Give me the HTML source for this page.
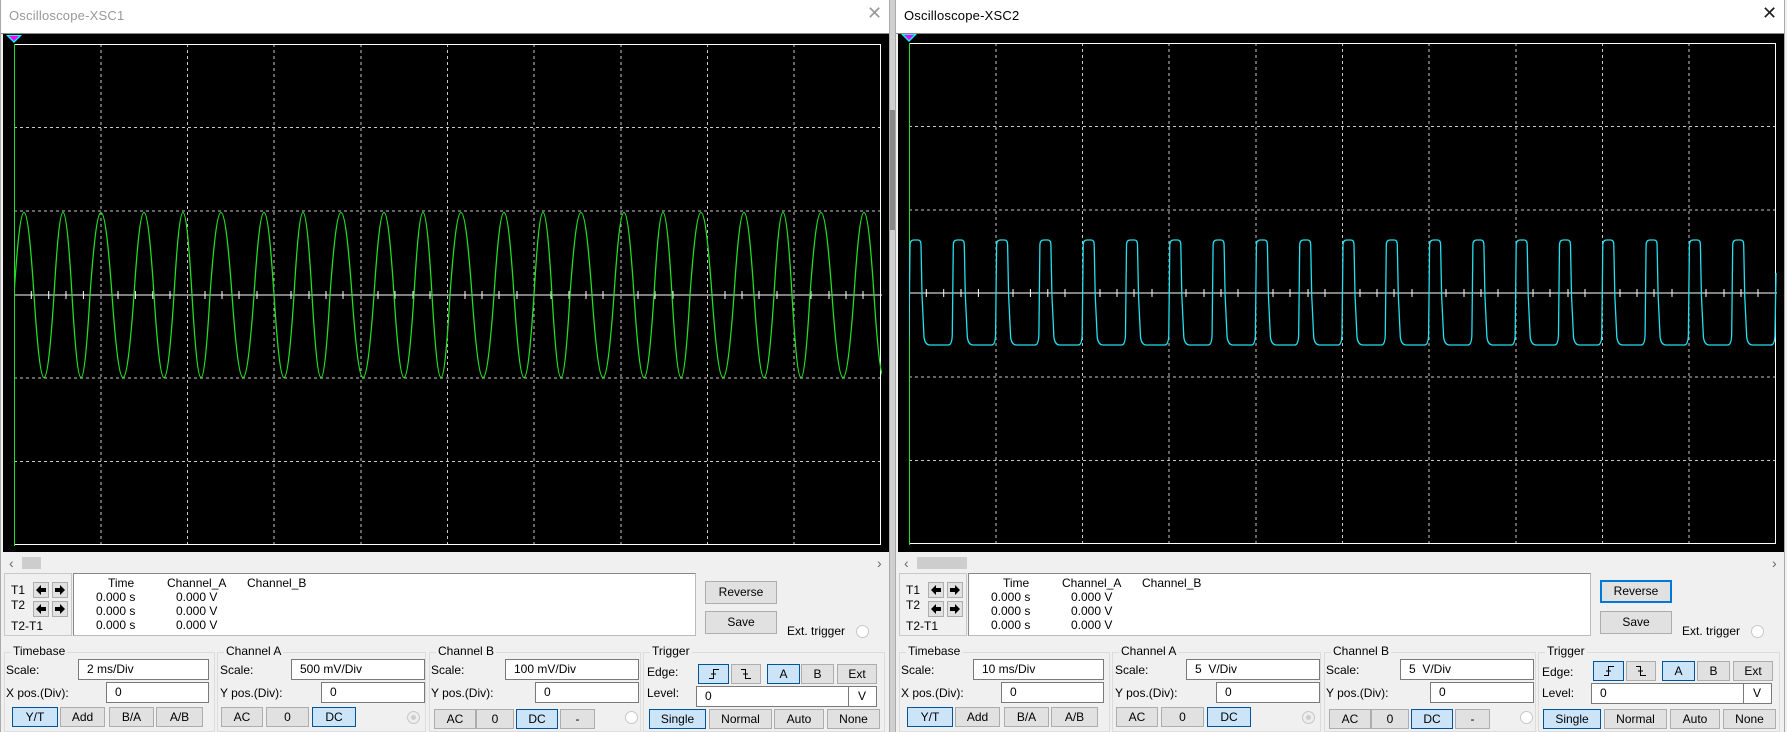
<!DOCTYPE html>
<html><head><meta charset="utf-8"><style>
*{box-sizing:border-box;margin:0;padding:0}
body{width:1787px;height:732px;overflow:hidden;background:#f0f0f0;position:relative;font-family:"Liberation Sans",sans-serif;font-size:12px;color:#000}
.w{position:absolute;top:0;width:890px;height:732px;background:#f0f0f0;border-left:1px solid #aaa;border-right:1px solid #aaa}
.a{position:absolute}
.tb{left:0;top:0;width:888px;height:34px;background:#fff;border-bottom:1px solid #8a8a8a}
.tt{left:8px;top:8px;font-size:13px;letter-spacing:0.2px}
.scr{left:2px;top:34px;width:886px;height:518px;background:#000}
.btn{position:absolute;background:#e1e1e1;border:1px solid #adadad;text-align:center;line-height:18px;height:20px;font-size:12px}
.btn svg{position:absolute;left:50%;top:50%;transform:translate(-50%,-50%)}
.sel{background:#cce4f7;border-color:#005499}
.inp{position:absolute;background:#fff;border:1px solid #7a7a7a;height:21px;line-height:19px;padding-left:8px}
.grp{position:absolute;border:1px solid #dcdcdc;top:652px;height:80px}
.gl{position:absolute;top:-9px;left:6px;background:#f0f0f0;padding:0 2px}
.rad{position:absolute;width:13px;height:13px;border-radius:50%;border:1px solid #c8c8c8;background:#fff}
.ar{width:16px;height:16px}
</style></head><body>

<div class="a" style="left:889px;top:0;width:8px;height:732px;background:#d0d0d0"></div>
<div class="a" style="left:890px;top:110px;width:6px;height:120px;background:#888"></div>

<!-- LEFT WINDOW -->
<div class="w" style="left:0">
 <div class="a tb"></div>
 <div class="a tt" style="color:#999">Oscilloscope-XSC1</div>
 <div class="a" style="left:866px;top:3px;font-size:18px;color:#999">✕</div>
 <div class="a scr"></div>
 <svg class="a" style="left:13px;top:44px;overflow:hidden" width="868" height="502" viewBox="0 0 868 502">
  <g stroke="#c8c8c8" stroke-dasharray="3,3" stroke-width="1">
   <path d="M87 0V502M173.5 0V502M260 0V502M347 0V502M433.5 0V502M520 0V502M607 0V502M693.5 0V502M780 0V502M0 83.5H868M0 167H868M0 334H868M0 417.5H868"/>
  </g>
  <rect x="0.5" y="0.5" width="866" height="500" fill="none" stroke="#fff"/>
  <line x1="0" y1="251" x2="868" y2="251" stroke="#fff"/>
  <g stroke="#fff"><path d="M17.3 247v8M34.7 247v8M52 247v8M69.4 247v8M104 247v8M121.4 247v8M138.8 247v8M156 247v8M191 247v8M208 247v8M225 247v8M243 247v8M277 247v8M295 247v8M312 247v8M329 247v8M364 247v8M381 247v8M399 247v8M416 247v8M451 247v8M468 247v8M485 247v8M503 247v8M537 247v8M555 247v8M572 247v8M589 247v8M624 247v8M641 247v8M659 247v8M676 247v8M711 247v8M728 247v8M745 247v8M763 247v8M797 247v8M815 247v8M832 247v8M849 247v8"/></g>
  <line x1="0.5" y1="0" x2="0.5" y2="502" stroke="#2d2" />
  <path fill="none" stroke="#22dd22" stroke-width="1.3" d="M0,251 c7.2,-110 12.8,-110 20,0 c7.2,110 12.8,110 20,0 c6.5,-110 11.5,-110 18,0 c6.5,110 11.5,110 18,0 c7.9,-110 14.1,-110 22,0 c7.9,110 14.1,110 22,0 c7.2,-110 12.8,-110 20,0 c7.2,110 12.8,110 20,0 c6.5,-110 11.5,-110 18,0 c6.5,110 11.5,110 18,0 c7.9,-110 14.1,-110 22,0 c7.9,110 14.1,110 22,0 c7.2,-110 12.8,-110 20,0 c7.2,110 12.8,110 20,0 c6.5,-110 11.5,-110 18,0 c6.5,110 11.5,110 18,0 c7.9,-110 14.1,-110 22,0 c7.9,110 14.1,110 22,0 c7.2,-110 12.8,-110 20,0 c7.2,110 12.8,110 20,0 c6.5,-110 11.5,-110 18,0 c6.5,110 11.5,110 18,0 c7.9,-110 14.1,-110 22,0 c7.9,110 14.1,110 22,0 c7.2,-110 12.8,-110 20,0 c7.2,110 12.8,110 20,0 c6.5,-110 11.5,-110 18,0 c6.5,110 11.5,110 18,0 c7.9,-110 14.1,-110 22,0 c7.9,110 14.1,110 22,0 c7.2,-110 12.8,-110 20,0 c7.2,110 12.8,110 20,0 c6.5,-110 11.5,-110 18,0 c6.5,110 11.5,110 18,0 c7.9,-110 14.1,-110 22,0 c7.9,110 14.1,110 22,0 c7.2,-110 12.8,-110 20,0 c7.2,110 12.8,110 20,0 c6.5,-110 11.5,-110 18,0 c6.5,110 11.5,110 18,0 c7.9,-110 14.1,-110 22,0 c7.9,110 14.1,110 22,0 c7.2,-110 12.8,-110 20,0 c7.2,110 12.8,110 20,0 c6.5,-110 11.5,-110 18,0 c6.5,110 11.5,110 18,0"/>
 </svg>
 <svg class="a" style="left:5px;top:35px" width="18" height="10"><path d="M0 0H16L8 8Z" fill="#0ff"/><path d="M3 1H13L8 6Z" fill="#f0f"/></svg>

 <div class="a" style="left:8px;top:556px;color:#666;font-size:14px;line-height:14px">‹</div>
 <div class="a" style="left:21px;top:557px;width:19px;height:12px;background:#cdcdcd"></div>
 <div class="a" style="left:876px;top:556px;color:#666;font-size:14px;line-height:14px">›</div>

 <div class="a" style="left:3px;top:573px;width:68px;height:63px;border:1px solid #c8c8c8"></div>
 <div class="a" style="left:10px;top:583px">T1</div>
 <div class="a" style="left:10px;top:598px">T2</div>
 <div class="a" style="left:10px;top:619px">T2-T1</div>
 <div class="btn ar" style="left:32px;top:582px"><svg width="10" height="10"><path d="M0 5L5 0V3H10V7H5V10Z"/></svg></div>
 <div class="btn ar" style="left:51px;top:582px"><svg width="10" height="10"><path d="M10 5L5 0V3H0V7H5V10Z"/></svg></div>
 <div class="btn ar" style="left:32px;top:601px"><svg width="10" height="10"><path d="M0 5L5 0V3H10V7H5V10Z"/></svg></div>
 <div class="btn ar" style="left:51px;top:601px"><svg width="10" height="10"><path d="M10 5L5 0V3H0V7H5V10Z"/></svg></div>
 <div class="a" style="left:72px;top:573px;width:623px;height:63px;background:#fff;border:1px solid #bbb;border-top-color:#888;border-left-color:#888"></div>
 <div class="a" style="left:107px;top:576px">Time</div>
 <div class="a" style="left:166px;top:576px">Channel_A</div>
 <div class="a" style="left:246px;top:576px">Channel_B</div>
 <div class="a" style="left:95px;top:590px;line-height:14px">0.000 s<br>0.000 s<br>0.000 s</div>
 <div class="a" style="left:175px;top:590px;line-height:14px">0.000 V<br>0.000 V<br>0.000 V</div>
 <div class="btn" style="left:704px;top:581px;width:72px;height:23px;line-height:21px">Reverse</div>
 <div class="btn" style="left:704px;top:611px;width:72px;height:23px;line-height:21px">Save</div>
 <div class="a" style="left:786px;top:624px">Ext. trigger</div>
 <div class="rad" style="left:855px;top:625px"></div>

 <div class="grp" style="left:3px;width:211px"><span class="gl">Timebase</span></div>
 <div class="a" style="left:5px;top:663px">Scale:</div>
 <div class="inp" style="left:77px;top:659px;width:131px">2 ms/Div</div>
 <div class="a" style="left:5px;top:686px">X pos.(Div):</div>
 <div class="inp" style="left:105px;top:682px;width:103px">0</div>
 <div class="btn sel" style="left:11px;top:707px;width:46px">Y/T</div>
 <div class="btn" style="left:59px;top:707px;width:45px">Add</div>
 <div class="btn" style="left:108px;top:707px;width:45px">B/A</div>
 <div class="btn" style="left:155px;top:707px;width:47px">A/B</div>

 <div class="grp" style="left:216px;width:209px"><span class="gl">Channel A</span></div>
 <div class="a" style="left:219px;top:663px">Scale:</div>
 <div class="inp" style="left:290px;top:659px;width:134px">500 mV/Div</div>
 <div class="a" style="left:219px;top:686px">Y pos.(Div):</div>
 <div class="inp" style="left:320px;top:682px;width:104px">0</div>
 <div class="btn" style="left:220px;top:707px;width:42px">AC</div>
 <div class="btn" style="left:265px;top:707px;width:43px">0</div>
 <div class="btn sel" style="left:311px;top:707px;width:44px">DC</div>
 <div class="rad" style="left:406px;top:711px;background:#ccc;box-shadow:inset 0 0 0 3px #eee"></div>

 <div class="grp" style="left:428px;width:212px"><span class="gl">Channel B</span></div>
 <div class="a" style="left:430px;top:663px">Scale:</div>
 <div class="inp" style="left:504px;top:659px;width:134px">100 mV/Div</div>
 <div class="a" style="left:430px;top:686px">Y pos.(Div):</div>
 <div class="inp" style="left:534px;top:682px;width:104px">0</div>
 <div class="btn" style="left:433px;top:709px;width:42px">AC</div>
 <div class="btn" style="left:475px;top:709px;width:38px">0</div>
 <div class="btn sel" style="left:515px;top:709px;width:42px">DC</div>
 <div class="btn" style="left:559px;top:709px;width:35px">-</div>
 <div class="rad" style="left:624px;top:711px"></div>

 <div class="grp" style="left:642px;width:242px"><span class="gl">Trigger</span></div>
 <div class="a" style="left:646px;top:665px">Edge:</div>
 <div class="btn sel" style="left:697px;top:664px;width:31px"><svg width="12" height="10"><path d="M1 9.5H5.5V0.5H11M3 5H8" stroke="#000" fill="none"/></svg></div>
 <div class="btn" style="left:730px;top:664px;width:30px"><svg width="12" height="10"><path d="M1 0.5H5.5V9.5H11M3 5H8" stroke="#000" fill="none"/></svg></div>
 <div class="btn sel" style="left:766px;top:664px;width:33px">A</div>
 <div class="btn" style="left:800px;top:664px;width:33px">B</div>
 <div class="btn" style="left:836px;top:664px;width:40px">Ext</div>
 <div class="a" style="left:646px;top:686px">Level:</div>
 <div class="inp" style="left:695px;top:686px;width:153px">0</div>
 <div class="inp" style="left:847px;top:686px;width:29px;padding-left:9px">V</div>
 <div class="btn sel" style="left:648px;top:709px;width:57px">Single</div>
 <div class="btn" style="left:708px;top:709px;width:63px">Normal</div>
 <div class="btn" style="left:773px;top:709px;width:50px">Auto</div>
 <div class="btn" style="left:826px;top:709px;width:53px">None</div>
</div>

<!-- RIGHT WINDOW -->
<div class="w" style="left:895px">
 <div class="a tb"></div>
 <div class="a tt" style="color:#000">Oscilloscope-XSC2</div>
 <div class="a" style="left:866px;top:3px;font-size:18px;color:#222">✕</div>
 <div class="a scr"></div>
 <svg class="a" style="left:13px;top:43px;overflow:hidden" width="868" height="502" viewBox="0 0 868 502">
  <g stroke="#c8c8c8" stroke-dasharray="3,3" stroke-width="1">
   <path d="M87 0V502M173.5 0V502M260 0V502M347 0V502M433.5 0V502M520 0V502M607 0V502M693.5 0V502M780 0V502M0 83.5H868M0 167H868M0 334H868M0 417.5H868"/>
  </g>
  <rect x="0.5" y="0.5" width="866" height="500" fill="none" stroke="#fff"/>
  <line x1="0" y1="250" x2="868" y2="250" stroke="#fff"/>
  <g stroke="#fff"><path d="M17.3 246v8M34.7 246v8M52 246v8M69.4 246v8M104 246v8M121.4 246v8M138.8 246v8M156 246v8M191 246v8M208 246v8M225 246v8M243 246v8M277 246v8M295 246v8M312 246v8M329 246v8M364 246v8M381 246v8M399 246v8M416 246v8M451 246v8M468 246v8M485 246v8M503 246v8M537 246v8M555 246v8M572 246v8M589 246v8M624 246v8M641 246v8M659 246v8M676 246v8M711 246v8M728 246v8M745 246v8M763 246v8M797 246v8M815 246v8M832 246v8M849 246v8"/></g>
  <line x1="0.5" y1="0" x2="0.5" y2="502" stroke="#2d2"/>
  <path fill="none" stroke="#22e0ee" stroke-width="1.3" d="M-4,302 q4,0 4,-12 l1,-88 q0,-5 4,-5 h4 q3,0 3,5 l1,50 l2,42 q1,8 6,8 h18.3 q4,0 4,-12 l1,-88 q0,-5 4,-5 h4 q3,0 3,5 l1,50 l2,42 q1,8 6,8 h18.3 q4,0 4,-12 l1,-88 q0,-5 4,-5 h4 q3,0 3,5 l1,50 l2,42 q1,8 6,8 h18.3 q4,0 4,-12 l1,-88 q0,-5 4,-5 h4 q3,0 3,5 l1,50 l2,42 q1,8 6,8 h18.3 q4,0 4,-12 l1,-88 q0,-5 4,-5 h4 q3,0 3,5 l1,50 l2,42 q1,8 6,8 h18.3 q4,0 4,-12 l1,-88 q0,-5 4,-5 h4 q3,0 3,5 l1,50 l2,42 q1,8 6,8 h18.3 q4,0 4,-12 l1,-88 q0,-5 4,-5 h4 q3,0 3,5 l1,50 l2,42 q1,8 6,8 h18.3 q4,0 4,-12 l1,-88 q0,-5 4,-5 h4 q3,0 3,5 l1,50 l2,42 q1,8 6,8 h18.3 q4,0 4,-12 l1,-88 q0,-5 4,-5 h4 q3,0 3,5 l1,50 l2,42 q1,8 6,8 h18.3 q4,0 4,-12 l1,-88 q0,-5 4,-5 h4 q3,0 3,5 l1,50 l2,42 q1,8 6,8 h18.3 q4,0 4,-12 l1,-88 q0,-5 4,-5 h4 q3,0 3,5 l1,50 l2,42 q1,8 6,8 h18.3 q4,0 4,-12 l1,-88 q0,-5 4,-5 h4 q3,0 3,5 l1,50 l2,42 q1,8 6,8 h18.3 q4,0 4,-12 l1,-88 q0,-5 4,-5 h4 q3,0 3,5 l1,50 l2,42 q1,8 6,8 h18.3 q4,0 4,-12 l1,-88 q0,-5 4,-5 h4 q3,0 3,5 l1,50 l2,42 q1,8 6,8 h18.3 q4,0 4,-12 l1,-88 q0,-5 4,-5 h4 q3,0 3,5 l1,50 l2,42 q1,8 6,8 h18.3 q4,0 4,-12 l1,-88 q0,-5 4,-5 h4 q3,0 3,5 l1,50 l2,42 q1,8 6,8 h18.3 q4,0 4,-12 l1,-88 q0,-5 4,-5 h4 q3,0 3,5 l1,50 l2,42 q1,8 6,8 h18.3 q4,0 4,-12 l1,-88 q0,-5 4,-5 h4 q3,0 3,5 l1,50 l2,42 q1,8 6,8 h18.3 q4,0 4,-12 l1,-88 q0,-5 4,-5 h4 q3,0 3,5 l1,50 l2,42 q1,8 6,8 h18.3 q4,0 4,-12 l1,-88 q0,-5 4,-5 h4 q3,0 3,5 l1,50 l2,42 q1,8 6,8 h18.3 q4,0 4,-12 l1,-60"/>
 </svg>
 <svg class="a" style="left:5px;top:34px" width="18" height="10"><path d="M0 0H16L8 8Z" fill="#0ff"/><path d="M3 1H13L8 6Z" fill="#f0f"/></svg>

 <div class="a" style="left:8px;top:556px;color:#666;font-size:14px;line-height:14px">‹</div>
 <div class="a" style="left:21px;top:557px;width:50px;height:12px;background:#cdcdcd"></div>
 <div class="a" style="left:876px;top:556px;color:#666;font-size:14px;line-height:14px">›</div>

 <div class="a" style="left:3px;top:573px;width:68px;height:63px;border:1px solid #c8c8c8"></div>
 <div class="a" style="left:10px;top:583px">T1</div>
 <div class="a" style="left:10px;top:598px">T2</div>
 <div class="a" style="left:10px;top:619px">T2-T1</div>
 <div class="btn ar" style="left:32px;top:582px"><svg width="10" height="10"><path d="M0 5L5 0V3H10V7H5V10Z"/></svg></div>
 <div class="btn ar" style="left:51px;top:582px"><svg width="10" height="10"><path d="M10 5L5 0V3H0V7H5V10Z"/></svg></div>
 <div class="btn ar" style="left:32px;top:601px"><svg width="10" height="10"><path d="M0 5L5 0V3H10V7H5V10Z"/></svg></div>
 <div class="btn ar" style="left:51px;top:601px"><svg width="10" height="10"><path d="M10 5L5 0V3H0V7H5V10Z"/></svg></div>
 <div class="a" style="left:72px;top:573px;width:623px;height:63px;background:#fff;border:1px solid #bbb;border-top-color:#888;border-left-color:#888"></div>
 <div class="a" style="left:107px;top:576px">Time</div>
 <div class="a" style="left:166px;top:576px">Channel_A</div>
 <div class="a" style="left:246px;top:576px">Channel_B</div>
 <div class="a" style="left:95px;top:590px;line-height:14px">0.000 s<br>0.000 s<br>0.000 s</div>
 <div class="a" style="left:175px;top:590px;line-height:14px">0.000 V<br>0.000 V<br>0.000 V</div>
 <div class="btn" style="left:704px;top:580px;width:72px;height:23px;line-height:19px;border:2px solid #0078d7">Reverse</div>
 <div class="btn" style="left:704px;top:611px;width:72px;height:23px;line-height:21px">Save</div>
 <div class="a" style="left:786px;top:624px">Ext. trigger</div>
 <div class="rad" style="left:855px;top:625px"></div>

 <div class="grp" style="left:3px;width:211px"><span class="gl">Timebase</span></div>
 <div class="a" style="left:5px;top:663px">Scale:</div>
 <div class="inp" style="left:77px;top:659px;width:131px">10 ms/Div</div>
 <div class="a" style="left:5px;top:686px">X pos.(Div):</div>
 <div class="inp" style="left:105px;top:682px;width:103px">0</div>
 <div class="btn sel" style="left:11px;top:707px;width:46px">Y/T</div>
 <div class="btn" style="left:59px;top:707px;width:45px">Add</div>
 <div class="btn" style="left:108px;top:707px;width:45px">B/A</div>
 <div class="btn" style="left:155px;top:707px;width:47px">A/B</div>

 <div class="grp" style="left:216px;width:209px"><span class="gl">Channel A</span></div>
 <div class="a" style="left:219px;top:663px">Scale:</div>
 <div class="inp" style="left:290px;top:659px;width:134px">5&nbsp; V/Div</div>
 <div class="a" style="left:219px;top:686px">Y pos.(Div):</div>
 <div class="inp" style="left:320px;top:682px;width:104px">0</div>
 <div class="btn" style="left:220px;top:707px;width:42px">AC</div>
 <div class="btn" style="left:265px;top:707px;width:43px">0</div>
 <div class="btn sel" style="left:311px;top:707px;width:44px">DC</div>
 <div class="rad" style="left:406px;top:711px;background:#ccc;box-shadow:inset 0 0 0 3px #eee"></div>

 <div class="grp" style="left:428px;width:212px"><span class="gl">Channel B</span></div>
 <div class="a" style="left:430px;top:663px">Scale:</div>
 <div class="inp" style="left:504px;top:659px;width:134px">5&nbsp; V/Div</div>
 <div class="a" style="left:430px;top:686px">Y pos.(Div):</div>
 <div class="inp" style="left:534px;top:682px;width:104px">0</div>
 <div class="btn" style="left:433px;top:709px;width:42px">AC</div>
 <div class="btn" style="left:475px;top:709px;width:38px">0</div>
 <div class="btn sel" style="left:515px;top:709px;width:42px">DC</div>
 <div class="btn" style="left:559px;top:709px;width:35px">-</div>
 <div class="rad" style="left:624px;top:711px"></div>

 <div class="grp" style="left:642px;width:242px"><span class="gl">Trigger</span></div>
 <div class="a" style="left:646px;top:665px">Edge:</div>
 <div class="btn sel" style="left:697px;top:661px;width:31px"><svg width="12" height="10"><path d="M1 9.5H5.5V0.5H11M3 5H8" stroke="#000" fill="none"/></svg></div>
 <div class="btn" style="left:730px;top:661px;width:30px"><svg width="12" height="10"><path d="M1 0.5H5.5V9.5H11M3 5H8" stroke="#000" fill="none"/></svg></div>
 <div class="btn sel" style="left:766px;top:661px;width:33px">A</div>
 <div class="btn" style="left:801px;top:661px;width:33px">B</div>
 <div class="btn" style="left:837px;top:661px;width:40px">Ext</div>
 <div class="a" style="left:646px;top:686px">Level:</div>
 <div class="inp" style="left:695px;top:683px;width:153px">0</div>
 <div class="inp" style="left:847px;top:683px;width:29px;padding-left:9px">V</div>
 <div class="btn sel" style="left:647px;top:709px;width:58px">Single</div>
 <div class="btn" style="left:708px;top:709px;width:63px">Normal</div>
 <div class="btn" style="left:774px;top:709px;width:50px">Auto</div>
 <div class="btn" style="left:827px;top:709px;width:53px">None</div>
</div>
</body></html>
